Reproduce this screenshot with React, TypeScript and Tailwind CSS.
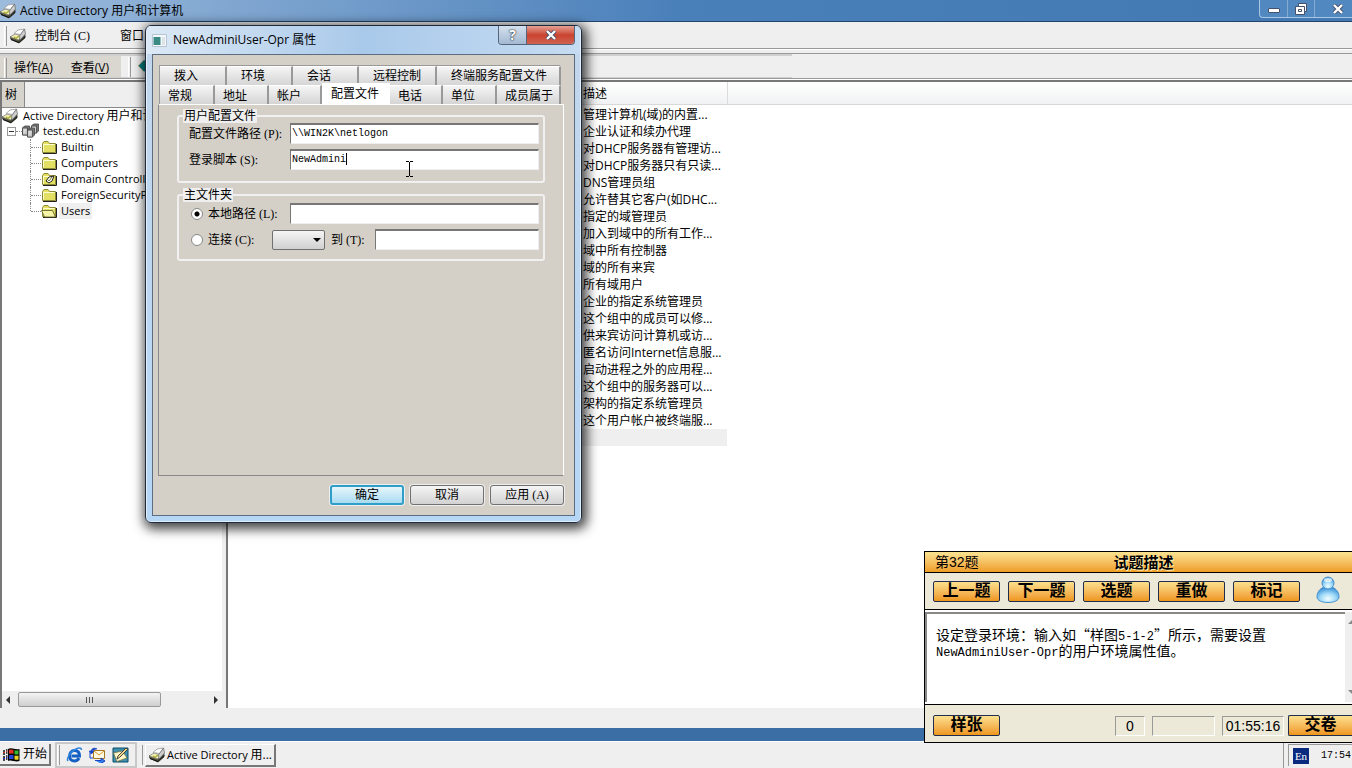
import type { ReactNode } from 'react';

const TREE = [
  { name: 'Builtin', kind: 'closed' },
  { name: 'Computers', kind: 'closed' },
  { name: 'Domain Controllers', kind: 'unit' },
  { name: 'ForeignSecurityPrincipals', kind: 'closed' },
  { name: 'Users', kind: 'open' },
];

const DESCRIPTIONS = [
  '管理计算机(域)的内置...',
  '企业认证和续办代理',
  '对DHCP服务器有管理访...',
  '对DHCP服务器只有只读...',
  'DNS管理员组',
  '允许替其它客户(如DHC...',
  '指定的域管理员',
  '加入到域中的所有工作...',
  '域中所有控制器',
  '域的所有来宾',
  '所有域用户',
  '企业的指定系统管理员',
  '这个组中的成员可以修...',
  '供来宾访问计算机或访...',
  '匿名访问Internet信息服...',
  '启动进程之外的应用程...',
  '这个组中的服务器可以...',
  '架构的指定系统管理员',
  '这个用户帐户被终端服...',
];

const TABS_BACK = [
  { label: '拨入', width: 'w-[67px]' },
  { label: '环境', width: 'w-[66px]' },
  { label: '会话', width: 'w-[66px]' },
  { label: '远程控制', width: 'w-[78px]' },
  { label: '终端服务配置文件', width: 'w-[124px]' },
];

const TABS_FRONT = [
  { label: '常规', width: 'w-[55px]' },
  { label: '地址', width: 'w-[54px]' },
  { label: '帐户', width: 'w-[53px]' },
  { label: '配置文件', width: 'w-[68px]', active: true },
  { label: '电话', width: 'w-[53px]' },
  { label: '单位', width: 'w-[54px]' },
  { label: '成员属于', width: 'w-[64px]' },
];

function ConsoleIcon({ className = 'size-4' }: { className?: string }) {
  return (
    <svg viewBox="0 0 16 16" className={`shrink-0 ${className}`} aria-hidden="true">
      <path d="m0 8.500 1 3 8 3.500 6-5V6.500L9 12z" fill="#55553f" stroke="#222" strokeWidth=".7" />
      <path d="M0 9 5 6l7 2-3.500 4z" fill="#eeeeb4" stroke="#777" strokeWidth=".7" />
      <path d="M4 5.500 8 2l6.500-1-4 5.500z" fill="#fff" stroke="#999" strokeWidth=".8" />
      <path d="m14.500 1 1 5-5.500 6-.5-4z" fill="#cfcfcf" stroke="#666" strokeWidth=".7" />
      <path d="m4 9 2 1.500L9 8" fill="none" stroke="#a8a830" strokeWidth="1.300" />
      <path d="m1 11.500 8 3 6-6" fill="none" stroke="#111" />
    </svg>
  );
}

function DomainIcon() {
  return (
    <svg viewBox="0 0 17 16" className="h-4 w-[17px] shrink-0" aria-hidden="true">
      {[
        [0, 3],
        [9, 1],
        [5, 5],
      ].map(([x, y]) => (
        <g key={x} stroke="#444" strokeWidth=".8">
          <path d={`M${x + 0.5} ${y + 2}l2-2h5v7l-2 2h-5z`} fill="#777" />
          <path d={`M${x + 0.5} ${y + 2}h5v7h-5z`} fill="#c4c4c4" />
          <path d={`M${x + 1.5} ${y + 4}h3M${x + 1.5} ${y + 6}h2`} stroke="#fff" />
        </g>
      ))}
    </svg>
  );
}

function FolderIcon({ kind }: { kind: string }) {
  return (
    <svg viewBox="0 0 16 14" className="h-[14px] w-4 shrink-0" aria-hidden="true">
      <path d="M2 13.500h13.500V4" fill="none" stroke="#222" />
      <path d="M1.500 12.500v-9l1.500-2h4l1.500 2h6v9z" fill="#e2df62" stroke="#8d8a35" />
      <path d="M2.500 11.500V4.500h11" fill="none" stroke="#fffed0" />
      {kind === 'unit' && (
        <g>
          <path d="m5 9 3-4 5-1-2 5-3 2z" fill="#fff" stroke="#222" />
          <path d="m7 8 1 1 3-4" fill="none" stroke="#777a20" />
        </g>
      )}
      {kind === 'open' && (
        <path d="M.5 6.500h11l3 6.500h-11z" fill="#f6f4a6" stroke="#55531c" strokeWidth=".8" />
      )}
    </svg>
  );
}

function WindowsIcon() {
  return (
    <svg viewBox="0 0 17 15" className="h-[15px] w-[17px] shrink-0" aria-hidden="true">
      <path d="M5 2c4-2 6 1 11.500 0v12C12 15.500 9 12.500 5 14z" fill="#000" />
      <path d="M6 3c2-.8 3-.4 4.500 0v4C9 6.600 8 6.400 6 7z" fill="#e33322" />
      <path d="M11.500 3.300c1.500.4 2.500.3 4 0v4c-1.500.3-2.500.2-4 0z" fill="#35b82d" />
      <path d="M6 8.300c2-.6 3-.3 4.500 0v4c-1.500-.4-2.500-.5-4.500 0z" fill="#2747d8" />
      <path d="M11.500 8.600c1.500.3 2.500.2 4 0v4c-1.500.3-2.500.2-4-.2z" fill="#f0d322" />
      <path d="M3 3h1.500M3 6h1.500M3 9h1.500M3 12h1.500M0 4h2M0 7h2M0 10h2M0 13h2" stroke="#111" strokeWidth="1.500" />
      <path d="M3 4.500h1.500M0 5.500h2" stroke="#c33" />
      <path d="M3 10.500h1.500M0 11.500h2" stroke="#22c" />
    </svg>
  );
}

function ExplorerIcon() {
  return (
    <svg viewBox="0 0 17 16" className="h-4 w-[17px]" aria-hidden="true">
      <path d="M13 11c-1 2-2.500 3-4.500 3C5.500 14 3.500 12 3.500 9s2-5.500 5-5.500c3 0 5 2 5 5.500H5.500" fill="none" stroke="#1560c4" strokeWidth="3" />
      <path d="M2 14C0 12 4 5 10 2c3-1.500 5.500-1.500 5.500 1" fill="none" stroke="#2f86dd" strokeWidth="1.500" />
    </svg>
  );
}

function OutlookIcon() {
  return (
    <svg viewBox="0 0 17 16" className="h-4 w-[17px]" aria-hidden="true">
      <path d="M4.500 3.500h11v8h-11z" fill="#fffbe2" stroke="#a87722" />
      <path d="m5 4 5 4 5-4" fill="none" stroke="#d89b30" />
      <path d="M8 2C5 .5 2.500 1.500 2.500 4M.5 4h4l-2 3z" fill="#1746c8" stroke="#1746c8" strokeWidth="1" />
      <path d="M1 4v7h3" fill="none" stroke="#1746c8" />
      <path d="M6 13.500h6v-2.500l4 3-4 2.500" fill="#2f7fe8" stroke="#1746c8" />
    </svg>
  );
}

function DesktopIcon() {
  return (
    <svg viewBox="0 0 17 16" className="h-4 w-[17px]" aria-hidden="true">
      <path d="M1 1h15v14H1z" fill="#3f8fae" stroke="#0b4a66" />
      <path d="m1.500 6 9-2 4.500 7-10 3.500z" fill="#fff6c9" stroke="#776a30" strokeWidth=".7" />
      <path d="m5 12 1-3 8-8 1.500 1.500-8 8z" fill="#f3d98a" stroke="#333" strokeWidth=".9" />
    </svg>
  );
}

function UserIcon() {
  return (
    <svg viewBox="0 0 24 28" className="h-7 w-6 shrink-0" aria-hidden="true">
      <defs>
        <radialGradient id="glass" cx=".5" cy=".75" r=".7">
          <stop offset="0" stopColor="#f2fdff" />
          <stop offset=".5" stopColor="#9fdaf8" />
          <stop offset="1" stopColor="#3b8fd6" />
        </radialGradient>
      </defs>
      <path d="M8 11C3 13 1 17 1 21c0 3.500 5 5.500 11 5.500S23 24.500 23 21c0-4-2-8-7-10z" fill="url(#glass)" stroke="#4a94cf" />
      <circle cx="12" cy="7" r="6" fill="url(#glass)" stroke="#4a94cf" />
      <ellipse cx="12" cy="4" rx="4" ry="2" fill="#fff" opacity=".7" />
    </svg>
  );
}

function CloseGlyph() {
  return (
    <svg viewBox="0 0 12 10" className="h-[10px] w-3" aria-hidden="true">
      <path d="m2 1 8 8M10 1 2 9" stroke="#45506a" strokeWidth="4" />
      <path d="m2 1 8 8M10 1 2 9" stroke="#fff" strokeWidth="2.400" />
    </svg>
  );
}

// Latin accelerator beside 12px Chinese labels
function Accel({ children }: { children: ReactNode }) {
  return <span className="ml-[3px] font-['Liberation_Serif',serif] leading-none">{children}</span>;
}

function Grip() {
  return <span className="h-5 w-[3px] shrink-0 border-r border-l border-r-[#999] border-l-white" />;
}

function TextField({ id, value, caret }: { id: string; value?: string; caret?: boolean }) {
  return (
    <span className="relative flex min-w-0 flex-1">
      <input
        id={id}
        type="text"
        defaultValue={value}
        className="h-[21px] w-full min-w-0 border border-t-2 border-t-[#777] border-r-[#eee] border-b-[#eee] border-l-[#777] bg-white pb-[2px] pl-px font-['Liberation_Mono',monospace] text-[10px] outline-none"
      />
      {caret && <span className="absolute top-1 left-14 h-3 w-px bg-black" />}
    </span>
  );
}

function DialogButton({ children, primary }: { children: ReactNode; primary?: boolean }) {
  return (
    <button
      type="button"
      className={
        primary
          ? 'h-5 w-[74px] rounded-[3px] border-2 border-[#2f9fc9] bg-linear-to-b from-[#e6f6fc] to-[#a9dcf1] leading-4 ring-1 ring-[#eee]'
          : 'h-5 w-[74px] rounded-[3px] border border-[#707070] bg-linear-to-b from-[#f5f5f5] to-[#d2d2d2] leading-4 ring-1 ring-[#eee]'
      }
    >
      {children}
    </button>
  );
}

function ExamButton({ children, className = 'w-[67px] rounded-[2px] border' }: { children: ReactNode; className?: string }) {
  return (
    <button
      type="button"
      className={`h-[21px] shrink-0 border-[#222c4c] bg-linear-to-b from-[#fbe08c] to-[#ee9618] pb-[2px] text-base leading-4 font-bold ${className}`}
    >
      {children}
    </button>
  );
}

function TitleBar() {
  return (
    <header className="flex h-[22px] items-center border-b border-[#23436b] bg-linear-to-r from-[#9dbbdc] via-[#4a80ba] to-[#4379b3]">
      <ConsoleIcon />
      <h1 className="pl-1 text-[12px] leading-4">Active Directory 用户和计算机</h1>
      <div className="ml-auto flex h-[18px] self-start rounded-bl border-b border-l border-[#a8c6e6] bg-[#5288c0]">
        <button type="button" aria-label="Minimize" className="flex w-7 items-center justify-center border-r border-[#86abd3]">
          <span className="mt-1 h-[5px] w-3 rounded-[1px] border border-[#45506a] bg-white" />
        </button>
        <button type="button" aria-label="Restore" className="flex w-[27px] items-center justify-center border-r border-[#86abd3]">
          <svg viewBox="0 0 12 12" className="size-3" aria-hidden="true">
            <path d="M3.500.500h8v8h-2v3h-9v-8h3z" fill="#fff" stroke="#45506a" />
            <path d="M9.500 8.500v-5h-6M3.500 6.500h3v2h-3z" fill="none" stroke="#45506a" />
          </svg>
        </button>
        <button type="button" aria-label="Close" className="flex w-[37px] items-center justify-center pl-2">
          <CloseGlyph />
        </button>
      </div>
    </header>
  );
}

function Menus() {
  return (
    <>
      <nav className="flex h-[27px] items-center border-b border-b-[#999] bg-[#efefef] pt-[2px] pl-1">
        <Grip />
        <ConsoleIcon className="ml-[3px] size-4" />
        <button type="button" className="ml-[9px]">
          控制台<Accel>(C)</Accel>
        </button>
        <button type="button" className="ml-[30px]">
          窗口<Accel>(W)</Accel>
        </button>
      </nav>
      <div className="h-1 border-t border-white" />
      <div className="flex h-[26px] items-center border-t border-b border-[#999] bg-[#efefef]">
        <div className="flex h-6 w-[792px] items-center border-t-2 border-b border-[#d0d0d0]">
          <div className="flex h-full items-center bg-[#dad7d0] pt-[2px] pr-3 pl-1">
            <Grip />
            <button type="button" className="ml-[7px]">
              操作(<u>A</u>)
            </button>
            <button type="button" className="ml-[18px]">
              查看(<u>V</u>)
            </button>
          </div>
          <span className="ml-[7px] h-5 w-[3px] border-r border-l border-r-[#999] border-l-white" />
          <span className="pl-[7px] text-[#008080]">◆</span>
        </div>
      </div>
      <div className="h-px bg-white" />
    </>
  );
}

function TreePane() {
  return (
    <aside className="flex w-[222px] shrink-0 flex-col border-l-2 border-[#777]">
      <div className="flex h-[25px] bg-[#efefef]">
        <div className="flex w-[23px] items-center border-r border-[#888] bg-[#d6d3cc] pl-[3px]">树</div>
      </div>
      <div className="flex-1 overflow-hidden border-t border-[#888] bg-white text-[11px] leading-4 whitespace-nowrap">
        <div className="flex h-[15px] items-center gap-[5px]">
          <ConsoleIcon />
          <span>
            Active Directory <span className="text-[12px]">用户和计算机</span>
          </span>
        </div>
        <div className="flex h-4 items-center pl-[5px]">
          <button type="button" aria-label="Collapse" className="flex size-[9px] items-center justify-center border border-[#999]">
            <span className="h-px w-[5px] bg-[#333]" />
          </button>
          <span className="w-[6px] border-t border-dotted border-[#888]" />
          <DomainIcon />
          <span className="pl-1">test.edu.cn</span>
        </div>
        <ul>
          {TREE.map((node) => (
            <li key={node.name} className="group flex h-4 items-center pl-7">
              <span className="h-4 border-l border-dotted border-[#888] group-last:h-2 group-last:self-start" />
              <span className="w-[10px] border-t border-dotted border-[#888]" />
              <FolderIcon kind={node.kind} />
              <span className={node.kind === 'open' ? 'ml-[2px] bg-[#efefef] px-[2px]' : 'ml-1'}>{node.name}</span>
            </li>
          ))}
        </ul>
      </div>
      <div className="flex h-[17px] items-center bg-[#efefef]">
        <span className="mx-1 border-y-4 border-r-4 border-y-transparent border-r-[#333]" />
        <div className="ml-1 flex h-[15px] w-[143px] items-center justify-center gap-[2px] rounded-[2px] border border-[#999] bg-linear-to-b from-[#f4f4f4] to-[#cfcfcf]">
          <span className="h-[6px] w-px bg-[#555]" />
          <span className="h-[6px] w-px bg-[#555]" />
          <span className="h-[6px] w-px bg-[#555]" />
        </div>
        <span className="mr-1 ml-auto border-y-4 border-l-4 border-y-transparent border-l-[#333]" />
      </div>
    </aside>
  );
}

function ListPane() {
  return (
    <section className="min-w-0 flex-1 border-l-2 border-[#777] bg-white">
      <div className="h-[23px] border-b border-[#d8d8d8] bg-linear-to-b from-white to-[#f1f2f4]">
        <div className="flex h-full w-[500px] items-center border-r border-[#dcdcdc] pt-[2px]">
          <span className="pl-[355px]">描述</span>
        </div>
      </div>
      <table className="mt-px w-[499px] table-fixed border-collapse text-left leading-4 whitespace-nowrap">
        <tbody>
          {DESCRIPTIONS.map((text) => (
            <tr key={text} className="h-[17px]">
              <td className="w-[355px] p-0" />
              <td className="p-0 align-bottom">{text}</td>
            </tr>
          ))}
          <tr className="h-[17px] bg-[#efefef]">
            <td className="p-0" />
            <td className="p-0" />
          </tr>
        </tbody>
      </table>
    </section>
  );
}

function PropertiesDialog() {
  return (
    <div
      role="dialog"
      aria-labelledby="dialog-title"
      className="absolute top-[25px] left-[145px] flex h-[498px] w-[437px] flex-col rounded-md border border-[#1d2b3d] bg-linear-to-b from-[#c3d7ec] to-[#b6d6f6] px-[6px] pb-[6px] shadow-[inset_0_0_0_1px_rgba(255,255,255,0.6),2px_3px_12px_3px_rgba(0,0,0,0.75)]"
    >
      <div className="-mx-[5px] flex h-7 shrink-0 items-center rounded-t bg-linear-to-r from-[#dce9f5] via-[#a9c9ea] to-[#c6dcf2] pl-[5px]">
        <svg viewBox="0 0 15 13" className="h-[13px] w-[15px]" aria-hidden="true">
          <path d="M.5.500h14v12H.5z" fill="#f4f8fb" stroke="#b5c4d2" />
          <path d="M1.500 3h7v8h-7z" fill="#3a8a86" />
          <path d="M10 3h3v8h-3z" fill="#dde4e8" />
        </svg>
        <h2 id="dialog-title" className="pl-[6px] text-[12px]">
          NewAdminiUser-Opr 属性
        </h2>
        <div className="mr-[5px] ml-auto flex h-[19px] self-start overflow-hidden rounded-b border border-t-0 border-[#56657c]">
          <button type="button" aria-label="Help" className="w-7 border-r border-[#56657c] bg-linear-to-b from-[#d5e1ee] to-[#a3b9d1] text-sm leading-4 font-bold text-white [text-shadow:0_0_2px_#222,0_0_1px_#222]">
            ?
          </button>
          <button type="button" aria-label="Close dialog" className="flex w-[47px] items-center justify-center bg-linear-to-b from-[#e5a094] via-[#c9422e] to-[#cf6350]">
            <CloseGlyph />
          </button>
        </div>
      </div>
      <div className="flex flex-1 flex-col border border-[#5c6d82] bg-[#d4d0c8] pt-[10px] pr-[10px] pl-[5px]">
        <div className="mr-1 ml-px border-t border-l border-[#999]">
          <div role="tablist" className="flex h-[19px]">
            {TABS_BACK.map((tab) => (
              <button
                key={tab.label}
                type="button"
                role="tab"
                className={`shrink-0 border-t border-r-2 border-t-white border-r-[#999] bg-linear-to-b from-[#f5f5f5] to-[#d5d5d5] pl-[14px] text-left leading-[18px] whitespace-nowrap ${tab.width}`}
              >
                {tab.label}
              </button>
            ))}
          </div>
          <div role="tablist" className="flex h-[19px] items-end">
            {TABS_FRONT.map((tab) => (
              <button
                key={tab.label}
                type="button"
                role="tab"
                aria-selected={!!tab.active}
                className={
                  tab.active
                    ? `h-[21px] shrink-0 bg-white pl-[9px] text-left leading-5 whitespace-nowrap ${tab.width}`
                    : `h-[19px] shrink-0 border-t border-r-2 border-t-white border-r-[#999] bg-linear-to-b from-[#f5f5f5] to-[#d5d5d5] pl-2 text-left leading-5 whitespace-nowrap ${tab.width}`
                }
              >
                {tab.label}
              </button>
            ))}
          </div>
        </div>
        <div className="flex h-[372px] flex-col border border-t-white border-r-white border-b-[#888] border-l-[#888] pt-1 pr-[18px] pl-[18px]">
          <fieldset className="h-[74px] rounded-[3px] border-2 border-[#f0f0f0] pr-1 pl-[10px]">
            <legend className="-ml-[6px] bg-[#efefef] px-px leading-[14px]">用户配置文件</legend>
            <div className="flex items-center">
              <label htmlFor="profile-path" className="w-[101px] pt-px">
                配置文件路径<Accel>(P):</Accel>
              </label>
              <TextField id="profile-path" value="\\WIN2K\netlogon" />
            </div>
            <div className="mt-[5px] flex items-center">
              <label htmlFor="logon-script" className="w-[101px] pt-px">
                登录脚本<Accel>(S):</Accel>
              </label>
              <TextField id="logon-script" value="NewAdmini" caret />
            </div>
          </fieldset>
          <fieldset className="mt-[5px] h-[73px] rounded-[3px] border-2 border-[#f0f0f0] pr-1 pl-3">
            <legend className="-ml-2 bg-[#efefef] px-px leading-[14px]">主文件夹</legend>
            <div className="flex items-center pt-px">
              <label className="flex w-[99px] items-center gap-[5px] pt-px">
                <input type="radio" name="home" defaultChecked className="size-3 appearance-none rounded-full border border-[#888] bg-white checked:bg-[radial-gradient(circle,#000_2px,#fff_3px)]" />
                <span>
                  本地路径<Accel>(L):</Accel>
                </span>
              </label>
              <TextField id="local-path" />
            </div>
            <div className="mt-[5px] flex items-center">
              <label className="flex w-[81px] items-center gap-[5px]">
                <input type="radio" name="home" className="size-3 appearance-none rounded-full border border-[#888] bg-white" />
                <span>
                  连接<Accel>(C):</Accel>
                </span>
              </label>
              <span className="relative">
                <select aria-label="Drive" className="block h-5 w-[53px] appearance-none rounded-[2px] border border-[#707070] bg-linear-to-b from-[#f5f5f5] to-[#d0d0d0]">
                  <option value="" />
                </select>
                <span className="pointer-events-none absolute top-2 right-1 border-x-4 border-t-4 border-x-transparent border-t-black" />
              </span>
              <label htmlFor="remote-path" className="w-[50px] pl-[6px]">
                到<Accel>(T):</Accel>
              </label>
              <TextField id="remote-path" />
            </div>
          </fieldset>
        </div>
        <div className="mt-[9px] flex justify-end gap-[6px]">
          <DialogButton primary>确定</DialogButton>
          <DialogButton>取消</DialogButton>
          <DialogButton>
            应用<Accel>(A)</Accel>
          </DialogButton>
        </div>
      </div>
    </div>
  );
}

function IBeam() {
  return (
    <svg viewBox="0 0 7 16" className="pointer-events-none absolute top-[161px] left-[406px] h-4 w-[7px]" aria-hidden="true">
      <path d="M0 .5h3M4 .5h3M3.500 1v14M0 15.500h3M4 15.500h3" fill="none" stroke="#000" />
    </svg>
  );
}

function ExamPanel() {
  return (
    <section className="absolute right-0 bottom-[25px] w-[428px] border-y border-l border-black bg-[#ece9d8]">
      <div className="grid h-5 grid-cols-[1fr_auto_1fr] items-center bg-linear-to-b from-[#fbe391] to-[#ee9d20] pl-[10px]">
        <span className="text-sm leading-5">
          第<span className="font-['Liberation_Sans']">32</span>题
        </span>
        <h2 className="text-[15px] leading-5 font-bold [text-shadow:1px_1px_0_#fff3c0]">试题描述</h2>
      </div>
      <div className="flex h-[38px] items-center gap-2 border-y border-black pl-2">
        <ExamButton>上一题</ExamButton>
        <ExamButton>下一题</ExamButton>
        <ExamButton>选题</ExamButton>
        <ExamButton>重做</ExamButton>
        <ExamButton>标记</ExamButton>
        <span className="pb-[2px] pl-2">
          <UserIcon />
        </span>
      </div>
      <div className="flex h-[94px] border-t-2 border-b-2 border-white">
        <div className="flex-1 border-t-2 border-l-2 border-[#888] bg-white pt-3 pl-[9px] font-['Noto_Sans_CJK_SC',sans-serif] text-sm leading-4">
          <p className="h-4">
            设定登录环境：输入如“样图<span className="font-['Liberation_Mono',monospace] text-[12px] leading-none">5-1-2</span>”所示，需要设置
          </p>
          <p className="h-4">
            <span className="font-['Liberation_Mono',monospace] text-[12px] leading-none">NewAdminiUser-Opr</span>的用户环境属性值。
          </p>
        </div>
        <div className="flex w-[7px] flex-col items-end justify-between bg-[#efefef] py-2">
          <span className="border-b-4 border-l-4 border-b-[#888] border-l-transparent" />
          <span className="border-t-4 border-l-4 border-t-[#888] border-l-transparent" />
        </div>
      </div>
      <div className="flex h-[38px] items-center border-t border-black pt-1 pl-2 font-['Liberation_Sans','Noto_Sans_CJK_SC',sans-serif] text-sm">
        <ExamButton>样张</ExamButton>
        <div className="mr-1 ml-auto flex gap-[7px] text-center leading-[18px]">
          <span className="h-5 w-[30px] border border-t-[#999] border-r-white border-b-white border-l-[#999]">0</span>
          <span className="h-5 w-[63px] border border-t-[#999] border-r-white border-b-white border-l-[#999]" />
          <span className="h-5 w-[62px] border border-t-[#999] border-r-white border-b-white border-l-[#999]">01:55:16</span>
        </div>
        <ExamButton className="w-16 rounded-l-[2px] border-y border-l">交卷</ExamButton>
      </div>
    </section>
  );
}

function Taskbar() {
  return (
    <footer className="flex h-[27px] items-center border-t border-white bg-[#efefef]">
      <button type="button" className="flex h-[22px] w-[51px] items-center gap-[3px] border-r-2 border-b-2 border-[#777] bg-[#efefef] pl-[3px] whitespace-nowrap">
        <WindowsIcon />
        开始
      </button>
      <div className="ml-1 flex h-full items-center gap-[6px] border-2 border-[#c8c8c8] pr-[6px]">
        <Grip />
        <a href="#ie" aria-label="Internet Explorer">
          <ExplorerIcon />
        </a>
        <a href="#mail" aria-label="Outlook Express">
          <OutlookIcon />
        </a>
        <a href="#desktop" aria-label="Desktop">
          <DesktopIcon />
        </a>
      </div>
      <span className="ml-[5px] h-5 border-l border-[#999]" />
      <button type="button" className="ml-[2px] flex h-[23px] w-[131px] items-center gap-[2px] border-t border-r-2 border-b-2 border-l border-t-white border-r-[#777] border-b-[#777] border-l-white pl-[3px] text-[11px] whitespace-nowrap">
        <ConsoleIcon />
        <span>
          Active Directory <span className="text-[12px]">用...</span>
        </span>
      </button>
      <div className="ml-auto flex h-full w-[69px] items-center border-l border-[#999] pl-1">
        <div className="flex h-[22px] w-full items-center gap-3 border-t border-l border-[#999] pl-1">
          <span className="flex size-4 shrink-0 items-center justify-center bg-[#0a2a80] font-['Liberation_Serif',serif] text-[11px] text-white">
            En
          </span>
          <time className="font-['Liberation_Mono',monospace] text-[10px]">17:54</time>
        </div>
      </div>
    </footer>
  );
}

export default function App() {
  return (
    <div
      lang="zh-CN"
      className="relative flex min-h-screen flex-col overflow-hidden bg-[#efefef] font-['Open_Sans','Noto_Sans_CJK_SC',sans-serif] text-[12px] leading-4 text-black"
    >
      <TitleBar />
      <Menus />
      <main className="flex flex-1 gap-1 border-t-2 border-[#777]">
        <TreePane />
        <ListPane />
      </main>
      <div className="h-5 shrink-0 bg-[#efefef]" />
      <div className="h-[13px] shrink-0 bg-[#3a6ea5]" />
      <Taskbar />
      <PropertiesDialog />
      <IBeam />
      <ExamPanel />
    </div>
  );
}
